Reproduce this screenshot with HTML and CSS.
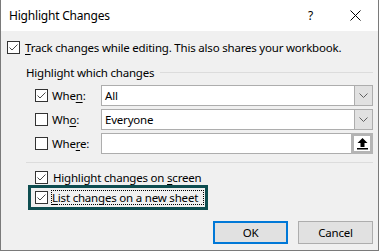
FILE: index.html
```html
<!DOCTYPE html>
<html lang="en">
<head>
    <meta charset="UTF-8">
    <title>Highlight Changes</title>
    <link rel="stylesheet" href="styles.css">
</head>
<body>
    <!-- Dialog window -->
    <div class="dialog">
        <div class="titlebar">
            <span class="title">Highlight Changes</span>
            <span class="help">?</span>
            <span class="close">
                <svg width="11" height="11" viewBox="0 0 11 11"><path d="M0.5 0.5 L10.5 10.5 M10.5 0.5 L0.5 10.5" stroke="#000" stroke-width="1"/></svg>
            </span>
        </div>

        <div class="content">
            <!-- Track changes -->
            <div class="check-row track">
                <span class="cb checked"><svg viewBox="0 0 11 11"><path d="M1.5 5.5 L4 8 L9.5 2.5" fill="none" stroke="#4a4a4a" stroke-width="1"/></svg></span>
                <span><u>T</u>rack changes while editing. This also shares your workbook.</span>
            </div>

            <!-- Group header -->
            <div class="group-head">
                <span>Highlight which changes</span>
                <span class="rule"></span>
            </div>

            <div class="field-row">
                <span class="cb checked"><svg viewBox="0 0 11 11"><path d="M1.5 5.5 L4 8 L9.5 2.5" fill="none" stroke="#4a4a4a" stroke-width="1"/></svg></span>
                <span class="field-label">Whe<u>n</u>:</span>
                <div class="combo">
                    <span class="combo-value">All</span>
                    <span class="drop"><svg width="9" height="5" viewBox="0 0 9 5"><path d="M0.5 0.5 L4.5 4.5 L8.5 0.5" fill="none" stroke="#606060" stroke-width="1"/></svg></span>
                </div>
            </div>

            <div class="field-row">
                <span class="cb"></span>
                <span class="field-label">Wh<u>o</u>:</span>
                <div class="combo">
                    <span class="combo-value">Everyone</span>
                    <span class="drop"><svg width="9" height="5" viewBox="0 0 9 5"><path d="M0.5 0.5 L4.5 4.5 L8.5 0.5" fill="none" stroke="#606060" stroke-width="1"/></svg></span>
                </div>
            </div>

            <div class="field-row">
                <span class="cb"></span>
                <span class="field-label">Whe<u>r</u>e:</span>
                <div class="combo">
                    <span class="combo-value"></span>
                    <span class="pick"><svg width="11" height="12" viewBox="0 0 11 12"><path d="M5.5 0 L10.5 5 L7.5 5 L7.5 9 L3.5 9 L3.5 5 L0.5 5 Z" fill="#000"/><rect x="0" y="10" width="11" height="1.5" fill="#000"/></svg></span>
                </div>
            </div>

            <div class="separator"></div>

            <div class="check-row screen">
                <span class="cb checked"><svg viewBox="0 0 11 11"><path d="M1.5 5.5 L4 8 L9.5 2.5" fill="none" stroke="#4a4a4a" stroke-width="1"/></svg></span>
                <span>Highlight changes on <u>s</u>creen</span>
            </div>

            <div class="focus-box">
                <span class="cb checked"><svg viewBox="0 0 11 11"><path d="M1.5 5.5 L4 8 L9.5 2.5" fill="none" stroke="#4a4a4a" stroke-width="1"/></svg></span>
                <span class="focus-text"><u>L</u>ist changes on a new sheet</span>
            </div>

            <!-- Buttons -->
            <div class="buttons">
                <button class="btn default">OK</button>
                <button class="btn">Cancel</button>
            </div>
        </div>
    </div>
</body>
</html>
```

FILE: styles.css
```css
/* Page */
body {
    margin: 0;
    font-family: "Noto Sans", "Open Sans", sans-serif;
    font-size: 11.5px;
    letter-spacing: -0.2px;
    color: #000;
}

/* Dialog frame */
.dialog {
    width: 379px;
    height: 251px;
    box-sizing: border-box;
    border: 1px solid #7a7a7a;
    border-top: none;
    background-color: #f0f0f0;
}

/* Title bar */
.titlebar {
    height: 31px;
    background-color: #fff;
    display: flex;
    align-items: center;
    padding-left: 8px;
    font-size: 12px;
}

.title {
    flex: 1;
}

.help {
    width: 12px;
    margin-right: 30px;
}

.close {
    display: flex;
    margin-right: 17px;
}

/* Main area */
.content {
    padding: 10px 5px 0 6px;
}

u {
    text-decoration-thickness: 1px;
    text-underline-offset: 2px;
}

/* Checkbox */
.cb {
    width: 13px;
    height: 13px;
    box-sizing: border-box;
    border: 1px solid #333;
    background-color: #fff;
    display: inline-flex;
    align-items: center;
    justify-content: center;
    flex-shrink: 0;
}

.cb svg {
    width: 11px;
    height: 11px;
}

.check-row {
    display: flex;
    align-items: center;
    height: 13px;
    gap: 5px;
    line-height: 13px;
}

.group-head {
    display: flex;
    align-items: center;
    height: 13px;
    margin-top: 12px;
    padding-left: 19px;
    gap: 6px;
}

.group-head .rule {
    flex: 1;
    height: 1px;
    background-color: #dcdcdc;
    margin-top: -1px;
}

/* Rows with a combo box */
.field-row {
    display: flex;
    align-items: center;
    height: 21px;
    padding-left: 28px;
    margin-top: 3px;
}

.group-head + .field-row {
    margin-top: 6px;
}

.field-label {
    width: 49px;
    margin-left: 4px;
}

.combo {
    flex: 1;
    height: 21px;
    box-sizing: border-box;
    border: 1px solid #adadad;
    background-color: #fff;
    display: flex;
}

.combo-value {
    flex: 1;
    padding-left: 3px;
    line-height: 19px;
}

.drop {
    width: 17px;
    background-color: #e1e1e1;
    border-left: 1px solid #adadad;
    display: flex;
    align-items: center;
    justify-content: center;
}

.pick {
    width: 16px;
    margin: -1px -1px -1px 0;
    border: 3px solid #b4b4b4;
    background-color: #fff;
    display: flex;
    align-items: center;
    justify-content: center;
}

.separator {
    height: 1px;
    background-color: #dcdcdc;
    margin: 8px 0 0 19px;
}

.check-row.screen {
    margin-top: 8px;
    padding-left: 28px;
}

/* Focused checkbox */
.focus-box {
    display: inline-flex;
    align-items: center;
    gap: 4px;
    margin: 1px 0 0 21px;
    padding: 3px 2px 3px 4px;
    border: 3px solid #0e4d50;
}

.focus-text {
    outline: 1px dotted #000;
    line-height: 13px;
    padding-right: 5px;
}

/* Dialog buttons */
.buttons {
    display: flex;
    justify-content: flex-end;
    gap: 10px;
    margin-top: 11px;
}

.btn {
    width: 75px;
    height: 23px;
    font-family: inherit;
    font-size: 11.5px;
    letter-spacing: -0.2px;
    background-color: #e1e1e1;
    border: 1px solid #adadad;
    padding: 0;
}

.btn.default {
    border: 2px solid #0078d7;
}
```
